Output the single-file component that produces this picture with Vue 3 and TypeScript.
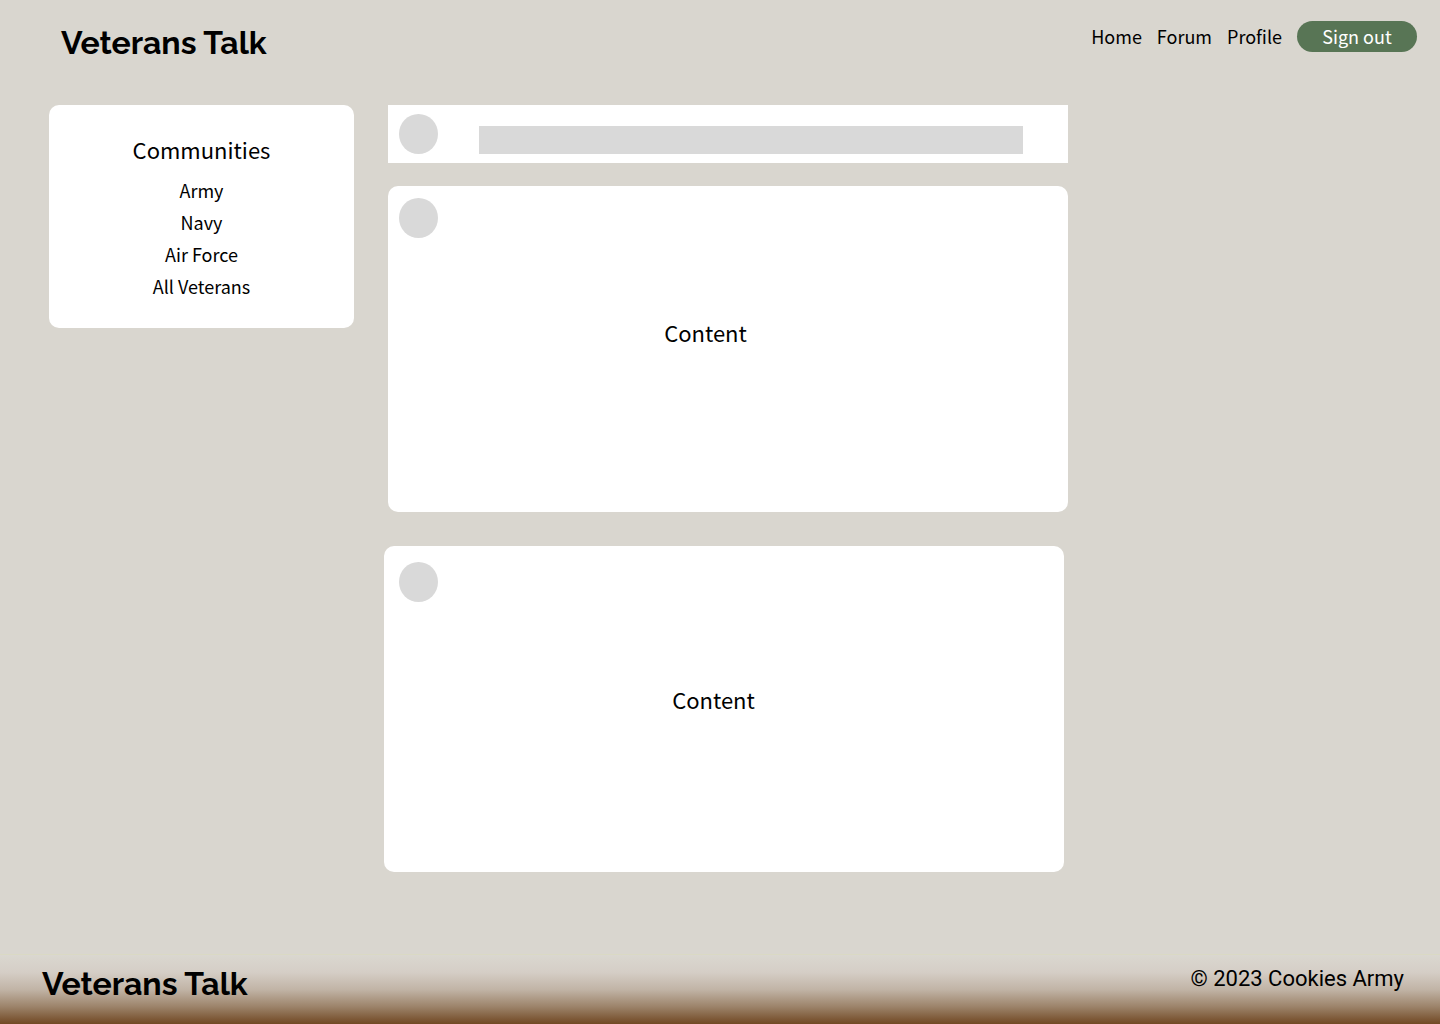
<script setup lang="ts">
interface Link {
  label: string
  href: string
}

const navLinks: Link[] = [
  { label: 'Home', href: '#home' },
  { label: 'Forum', href: '#forum' },
  { label: 'Profile', href: '#profile' },
]

const communities: Link[] = [
  { label: 'Army', href: '#army' },
  { label: 'Navy', href: '#navy' },
  { label: 'Air Force', href: '#air-force' },
  { label: 'All Veterans', href: '#all-veterans' },
]
</script>

<template>
  <div class="page">
    <header class="header">
      <a class="brand" href="#home">Veterans Talk</a>
      <nav class="nav" aria-label="Main">
        <a v-for="link in navLinks" :key="link.href" :href="link.href">{{ link.label }}</a>
        <button type="button" class="sign-out">Sign out</button>
      </nav>
    </header>

    <main class="layout">
      <aside class="communities">
        <h2>Communities</h2>
        <ul>
          <li v-for="item in communities" :key="item.href">
            <a :href="item.href">{{ item.label }}</a>
          </li>
        </ul>
      </aside>

      <section class="feed">
        <form class="composer" @submit.prevent>
          <span class="avatar"></span>
          <input type="text" aria-label="Write a post" />
        </form>
        <article class="post">
          <span class="avatar"></span>
          <p>Content</p>
        </article>
        <article class="post post-second">
          <span class="avatar"></span>
          <p>Content</p>
        </article>
      </section>
    </main>

    <footer class="footer">
      <a class="brand" href="#home">Veterans Talk</a>
      <p>© 2023 Cookies Army</p>
    </footer>
  </div>
</template>

<style>
body {
  margin: 0;
  background: #d9d6cf;
}
</style>

<style scoped>
.page {
  box-sizing: border-box;
  display: flex;
  flex-direction: column;
  min-height: 100vh;
  background: #d9d6cf;
  color: #000;
  font-family: 'Noto Sans CJK SC', 'Noto Sans', sans-serif;
  font-size: 18px;
  line-height: 32px;
}

a {
  color: inherit;
  text-decoration: none;
}

p {
  margin: 0;
}

.brand {
  font-family: Raleway, Lato, sans-serif;
  font-size: 32px;
  font-weight: 700;
  line-height: 40px;
}

.header {
  display: flex;
  justify-content: space-between;
  align-items: flex-start;
  padding: 21px 23px 41px 61px;
}

.header .brand {
  padding-top: 2px;
}

.nav {
  display: flex;
  align-items: flex-start;
  gap: 15px;
  line-height: 30px;
}

.sign-out {
  width: 120px;
  height: 31px;
  padding: 0 0 2px;
  border: 0;
  border-radius: 16px;
  background: #587555;
  color: #fff;
  font: inherit;
}

.layout {
  display: flex;
  align-items: flex-start;
  gap: 34px;
  padding: 1px 49px 0;
}

.communities {
  box-sizing: border-box;
  flex: 0 0 305px;
  padding: 28px 0 26px;
  border-radius: 10px;
  background: #fff;
  text-align: center;
}

.communities h2 {
  margin: 0 0 9px;
  font-size: 22px;
  font-weight: 400;
  line-height: 32px;
}

.communities ul {
  margin: 0;
  padding: 0;
  list-style: none;
}

.feed {
  flex: 0 1 680px;
}

.avatar {
  flex: none;
  display: block;
  width: 39px;
  height: 40px;
  border-radius: 50%;
  background: #d9d9d9;
}

.composer {
  display: flex;
  align-items: flex-start;
  gap: 41px;
  padding: 9px 45px 9px 11px;
  background: #fff;
}

.composer input {
  flex: 1;
  box-sizing: border-box;
  min-width: 0;
  height: 28px;
  margin-top: 12px;
  padding: 0 8px;
  border: 0;
  border-radius: 0;
  background: #d9d9d9;
  font: inherit;
}

.post {
  box-sizing: border-box;
  min-height: 326px;
  margin-top: 23px;
  padding: 12px 56px 12px 11px;
  border-radius: 10px;
  background: #fff;
  font-size: 22px;
}

.post p {
  margin-top: 78px;
  text-align: center;
}

.post-second {
  margin: 34px 4px 0 -4px;
  padding: 16px 36px 12px 15px;
}

.post-second p {
  margin-top: 81px;
}

.footer {
  display: flex;
  justify-content: space-between;
  align-items: flex-start;
  box-sizing: border-box;
  min-height: 70px;
  margin-top: auto;
  padding: 9px 36px 0 42px;
  border-top: 1px solid #dad9c4;
  background: linear-gradient(#dad7d0, #d5cec6 25%, #c1b4a6 50%, #9c836a 75%, #714823);
}

.footer p {
  font-family: Roboto, sans-serif;
  font-size: 22px;
  line-height: 30px;
}
</style>
